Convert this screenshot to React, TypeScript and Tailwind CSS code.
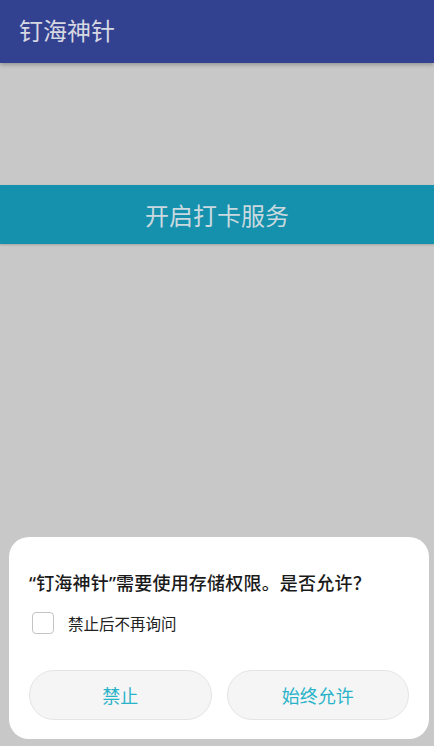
export default function App() {
  const font = { fontFamily: '"Noto Sans CJK SC", "Noto Sans", sans-serif' };
  const quote = { fontFamily: '"Noto Sans", sans-serif' };

  return (
    <div className="relative h-[746px] w-[434px] overflow-hidden bg-[#c8c8c8]" style={font}>
      <header className="relative z-10 flex h-[63px] items-center bg-[#334191] pb-[3px] pl-[19px] shadow-[0_2px_4px_rgba(0,0,0,0.25)]">
        <h1 className="text-[24px] leading-none text-[#d6d8e2]">钉海神针</h1>
      </header>

      <div className="mt-[122px] flex h-[59px] items-center justify-center bg-[#1591ad] shadow-[0_1px_2px_rgba(0,0,0,0.2)]">
        <span className="text-[24px] leading-none text-[#c9d9df]">开启打卡服务</span>
      </div>

      <div className="absolute left-[9px] top-[537px] flex h-[202px] w-[420px] flex-col rounded-[20px] bg-white px-[20px]">
        <p className="mt-[32px] text-[18px] leading-[26px] font-medium tracking-[0.2px] text-[#1a1a1a]">
          <span style={quote}>“</span>钉海神针<span style={quote}>”</span>需要使用存储权限。是否允许？
        </p>
        <label className="mt-[16px] flex items-center">
          <span className="ml-[3px] h-[22px] w-[22px] rounded-[4px] border border-[#c4c4c4] bg-white" />
          <span className="ml-[14px] text-[15.5px] leading-[22px] text-[#222]">禁止后不再询问</span>
        </label>
        <div className="mt-[36px] flex gap-[15px]">
          <button
            type="button"
            className="flex h-[50px] w-[184px] items-center justify-center rounded-full border border-[#e4e4e4] bg-[#f5f5f5] text-[18px] text-[#29b3c9]"
          >
            禁止
          </button>
          <button
            type="button"
            className="flex h-[50px] w-[184px] items-center justify-center rounded-full border border-[#e4e4e4] bg-[#f5f5f5] text-[18px] text-[#29b3c9]"
          >
            始终允许
          </button>
        </div>
      </div>
    </div>
  );
}
